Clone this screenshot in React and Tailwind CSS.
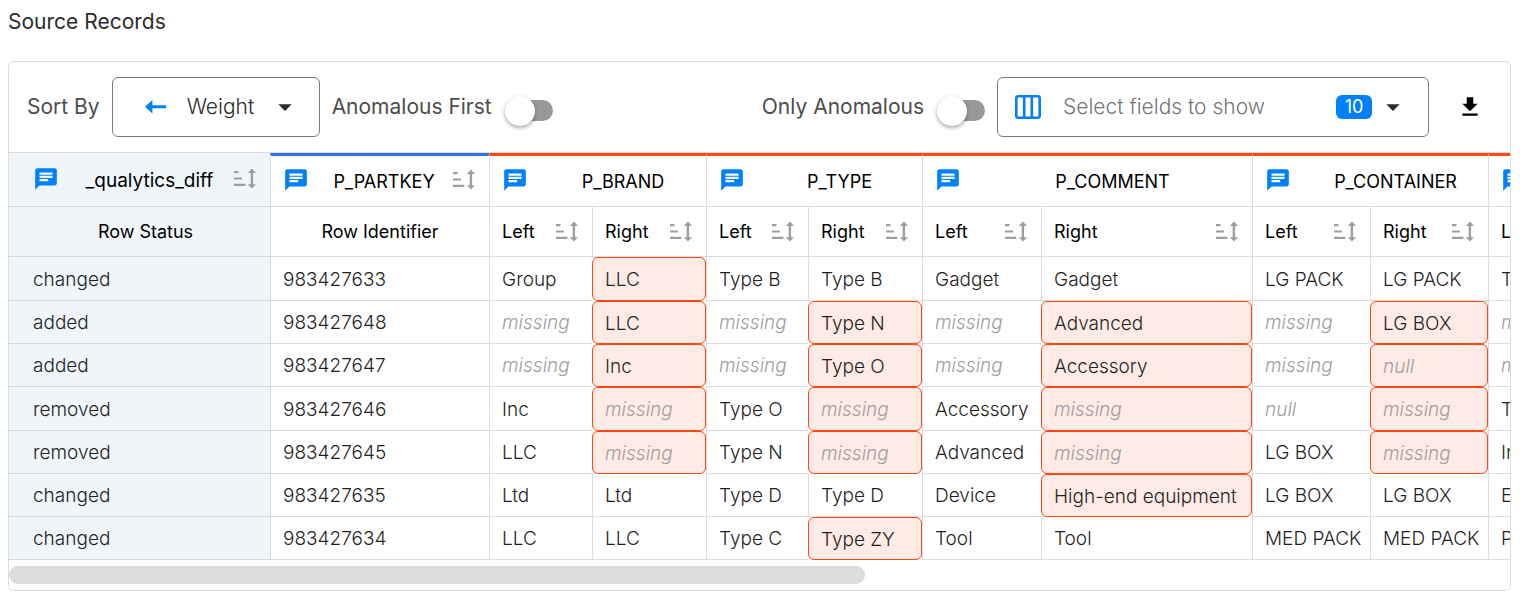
import { useState } from "react";
import { MdChat, MdArrowDropDown, MdFileDownload } from "react-icons/md";

const missing = { text: "missing", empty: true };
const nul = { text: "null", empty: true };
const hit = (cell) =>
  typeof cell === "string" ? { text: cell, anomalous: true } : { ...cell, anomalous: true };

const columnWidths = [
  "w-[261px]",
  "w-[219px]",
  "w-[103px]",
  "w-[114px]",
  "w-[102px]",
  "w-[114px]",
  "w-[119px]",
  "w-[211px]",
  "w-[118px]",
  "w-[118px]",
  "w-[118px]",
];

const groups = [
  { name: "P_BRAND", span: 2 },
  { name: "P_TYPE", span: 2 },
  { name: "P_COMMENT", span: 2 },
  { name: "P_CONTAINER", span: 2 },
  { name: "P_LINE", span: 1 },
];

const sides = ["Left", "Right", "Left", "Right", "Left", "Right", "Left", "Right", "Left"];

const rows = [
  ["changed", "983427633", "Group", hit("LLC"), "Type B", "Type B", "Gadget", "Gadget", "LG PACK", "LG PACK", "Tools"],
  ["added", "983427648", missing, hit("LLC"), missing, hit("Type N"), missing, hit("Advanced"), missing, hit("LG BOX"), missing],
  ["added", "983427647", missing, hit("Inc"), missing, hit("Type O"), missing, hit("Accessory"), missing, hit(nul), missing],
  ["removed", "983427646", "Inc", hit(missing), "Type O", hit(missing), "Accessory", hit(missing), nul, hit(missing), "Tools"],
  ["removed", "983427645", "LLC", hit(missing), "Type N", hit(missing), "Advanced", hit(missing), "LG BOX", hit(missing), "Iron"],
  ["changed", "983427635", "Ltd", "Ltd", "Type D", "Type D", "Device", hit("High-end equipment"), "LG BOX", "LG BOX", "Extra"],
  ["changed", "983427634", "LLC", "LLC", "Type C", hit("Type ZY"), "Tool", "Tool", "MED PACK", "MED PACK", "Parts"],
];

function SortButton({ label }) {
  return (
    <button type="button" aria-label={`Sort ${label}`} className="shrink-0 text-[#9e9e9e]">
      <svg viewBox="0 0 24 24" className="block size-6" fill="currentColor" aria-hidden="true">
        <path d="M0 4h4.5v2.2H0zM0 10.4h8v2.2H0zM0 16.8h11.4v2.2H0z" />
        <path d="M17.9 1.6l4.1 4.4h-2.9v11.2h2.9l-4.1 4.4-4.1-4.4h2.9V6h-2.9z" />
      </svg>
    </button>
  );
}

function CommentButton({ label }) {
  return (
    <button type="button" aria-label={`Comments on ${label}`} className="mr-3 shrink-0 text-[#0080fa]">
      <MdChat className="block size-[26px]" />
    </button>
  );
}

function Toggle({ label }) {
  return (
    <label className="flex items-center gap-[19px] text-[21px] text-[#4d4d4d]">
      {label}
      <input
        type="checkbox"
        role="switch"
        className="relative mt-1.5 h-[21px] w-[42px] appearance-none rounded-full bg-[#999] before:absolute before:-top-1 before:-left-1.5 before:size-[30px] before:rounded-full before:bg-white before:shadow-[0_2px_4px_rgba(0,0,0,0.35)] before:content-[''] checked:bg-[#80bffc] checked:before:left-[18px]"
      />
    </label>
  );
}

function ColumnsIcon() {
  return (
    <svg viewBox="0 0 26 24" className="h-6 w-[26px] shrink-0" fill="none" stroke="#0080fa" strokeWidth="2.6" aria-hidden="true">
      <rect x="1.3" y="1.3" width="23.4" height="21.4" rx="2" />
      <path d="M9.2 1v22M16.8 1v22" />
    </svg>
  );
}

function Cell({ value }) {
  const cell = typeof value === "string" ? { text: value } : value;
  const frame = cell.anomalous
    ? "rounded-md border border-[#ff4713] bg-[#ffebe6]"
    : "border-b border-l border-[#dcdcdc]";
  const ink = cell.empty ? "text-[#9e9e9e] italic" : "text-[#1f1f1f]";
  return <td className={`pt-0.5 pl-3 whitespace-nowrap ${frame} ${ink}`}>{cell.text}</td>;
}

export default function App() {
  const [sort, setSort] = useState("Weight");
  return (
    <main className="bg-white px-2 pt-2 font-['Inter',sans-serif] text-black">
      <h1 className="text-[21px] leading-7 text-[#2b2b2b]">Source Records</h1>

      <section className="mt-[25px] mr-px overflow-hidden rounded-md border border-[#dcdcdc]">
        <div className="flex h-[91px] items-center border-b border-[#dcdcdc] pr-[27px] pl-[18px]">
          <label htmlFor="sort-by" className="text-[21px] text-[#4d4d4d]">
            Sort By
          </label>
          <div className="ml-3 flex h-[60px] w-[208px] items-center rounded-md border border-[#7a7a7a] pl-8">
            <button type="button" aria-label="Reverse the sort order">
              <svg viewBox="0 0 22 14" className="block h-3.5 w-[22px]" fill="#0080fa" aria-hidden="true">
                <path d="M0 6.8L7.4 0v5.3H21v3H7.4v5.3z" />
              </svg>
            </button>
            <div className="relative ml-5 flex items-center">
              <select
                id="sort-by"
                value={sort}
                onChange={(event) => setSort(event.target.value)}
                className="w-[114px] appearance-none bg-transparent text-[21px] font-light text-[#2b2b2b]"
              >
                <option>Weight</option>
                <option>Name</option>
              </select>
              <MdArrowDropDown className="pointer-events-none absolute right-0 size-8 text-[#2b2b2b]" />
            </div>
          </div>
          <div className="ml-3">
            <Toggle label="Anomalous First" />
          </div>

          <div className="ml-auto">
            <Toggle label="Only Anomalous" />
          </div>
          <div className="ml-3 flex h-[60px] w-[432px] items-center rounded-md border border-[#7a7a7a] pr-[19px] pl-[17px]">
            <ColumnsIcon />
            <select
              aria-label="Select fields to show"
              className="ml-[22px] min-w-0 flex-1 appearance-none bg-transparent text-[21px] font-light text-[#757575]"
            >
              <option>Select fields to show</option>
            </select>
            <span className="flex h-6 w-9 items-center justify-center rounded-md bg-[#0080fa] text-lg text-white">10</span>
            <MdArrowDropDown className="pointer-events-none ml-[5px] size-8 shrink-0 text-[#2b2b2b]" />
          </div>
          <button type="button" aria-label="Download" className="ml-7">
            <MdFileDownload className="size-[26px]" />
          </button>
        </div>

        <div className="overflow-hidden">
          <table className="w-[1597px] table-fixed border-separate border-spacing-0 text-left text-lg leading-6 font-light">
            <colgroup>
              {columnWidths.map((width, index) => (
                <col key={index} className={width} />
              ))}
            </colgroup>
            <thead>
              <tr className="h-[54px]">
                <th className="border-b border-[#d2d8dd] bg-[#f0f5fa] p-0 pr-3 pb-0.5 pl-6 font-normal">
                  <div className="flex items-center">
                    <CommentButton label="_qualytics_diff" />
                    <span className="flex-1 pt-1 pr-1.5 text-center text-[19px]">_qualytics_diff</span>
                    <SortButton label="_qualytics_diff" />
                  </div>
                </th>
                <th className="border-t-3 border-b border-l border-[#dcdcdc] border-t-[#3371e0] p-0 pr-3 pb-0.5 pl-3 font-normal">
                  <div className="flex items-center">
                    <CommentButton label="P_PARTKEY" />
                    <span className="flex-1 pt-1 pr-1.5 text-center">P_PARTKEY</span>
                    <SortButton label="P_PARTKEY" />
                  </div>
                </th>
                {groups.map((group) => (
                  <th
                    key={group.name}
                    colSpan={group.span}
                    className="border-t-3 border-b border-l border-[#dcdcdc] border-t-[#ff4713] p-0 pb-0.5 pl-3 font-normal"
                  >
                    <div className="flex items-center">
                      <CommentButton label={group.name} />
                      <span className="flex-1 pt-1 text-center">{group.name}</span>
                    </div>
                  </th>
                ))}
              </tr>
              <tr className="h-[50px]">
                <th className="border-b border-[#d2d8dd] bg-[#f0f5fa] p-0 pl-3 text-center font-normal">Row Status</th>
                <th className="border-b border-l border-[#dcdcdc] p-0 text-center font-normal">Row Identifier</th>
                {sides.map((side, index) => (
                  <th key={index} className="border-b border-l border-[#dcdcdc] p-0 pr-3 pl-3 font-normal">
                    <div className="flex items-center justify-between">
                      {side}
                      <SortButton label={side} />
                    </div>
                  </th>
                ))}
              </tr>
            </thead>
            <tbody className="text-[19px]">
              {rows.map(([status, ...cells]) => (
                <tr key={cells[0]} className="h-[43px] nth-[3n+1]:not-last:h-11">
                  <td className="border-b border-[#d2d8dd] bg-[#f0f5fa] pt-0.5 pl-6 text-[#1f1f1f]">{status}</td>
                  {cells.map((value, index) => (
                    <Cell key={index} value={value} />
                  ))}
                </tr>
              ))}
            </tbody>
          </table>
        </div>
        <div className="py-1.5">
          <div className="h-[18px] w-[57%] rounded-full bg-[#dcdcdc]" />
        </div>
      </section>
    </main>
  );
}
